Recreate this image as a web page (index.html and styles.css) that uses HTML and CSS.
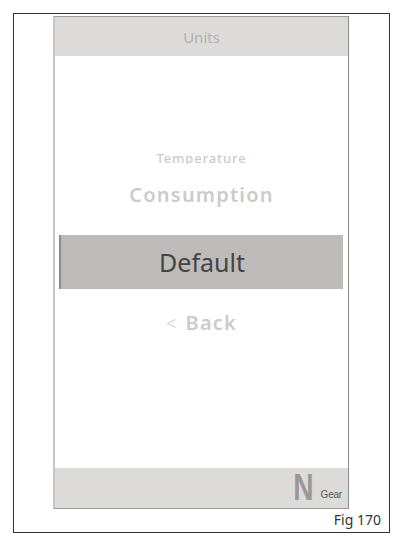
FILE: index.html
```html
<!DOCTYPE html>
<html lang="en">
<head>
    <meta charset="UTF-8">
    <meta name="viewport" content="width=device-width, initial-scale=1.0">
    <title>Units</title>
    <link rel="stylesheet" href="styles.css">
</head>
<body>

    <div class="frame">
        <!-- Dashboard screen -->
        <div class="screen">
            <div class="screen-header">Units</div>

            <div class="menu">
                <div class="item-clip">
                    <span class="item item-small">Temperature</span>
                </div>
                <div class="item">Consumption</div>
                <div class="item item-selected">Default</div>
                <div class="item"><span class="chevron">&lt;</span>Back</div>
            </div>

            <div class="screen-footer">
                <span class="gear-value">N</span>
                <span class="gear-label">Gear</span>
            </div>
        </div>

        <div class="caption">Fig 170</div>
    </div>

</body>
</html>
```

FILE: styles.css
```css
body {
    font-family: "Noto Sans", "Open Sans", sans-serif;
    margin: 0;
    background-color: #fff;
}
.frame {
    margin: 13px 0 0 13px;
    width: 336px;
    height: 516px;
    border: 1px solid #333;
    padding: 2px 0 0 39px;
    display: flex;
    flex-direction: column;
}
.screen {
    width: 293px;
    height: 491px;
    border-top: 1px solid #999;
    border-left: 2px solid #c6c6c6;
    border-right: 1px solid #8a8a8a;
    border-bottom: 1px solid #999;
    display: flex;
    flex-direction: column;
}
.screen-header {
    height: 39px;
    background-color: #dcdbd9;
    color: #b0afae;
    font-size: 15px;
    display: flex;
    align-items: center;
    justify-content: center;
}
.menu {
    flex: 1;
    display: flex;
    flex-direction: column;
    padding-top: 96px;
}
.item {
    height: 30px;
    line-height: 30px;
    text-align: center;
    font-size: 20px;
    font-weight: 600;
    letter-spacing: 1.2px;
    color: #cbcbcb;
}
.item-clip {
    height: 12px;
    overflow: hidden;
    display: flex;
    align-items: flex-end;
    justify-content: center;
    margin-bottom: 16px;
}
.item-small {
    height: 16px;
    line-height: 16px;
    font-size: 13px;
    font-weight: 500;
    letter-spacing: 0.9px;
    margin-bottom: -2px;
}
.item-selected {
    height: 54px;
    line-height: 54px;
    margin: 25px 5px 19px 4px;
    background-color: #bebab9;
    border-left: 2px solid #8e8c8b;
    font-size: 25px;
    font-weight: 400;
    letter-spacing: 0;
    color: #444;
}
.chevron {
    font-weight: 300;
    font-size: 18px;
    margin-right: 8px;
}
.screen-footer {
    height: 40px;
    background-color: #dcdbd9;
    display: flex;
    align-items: flex-end;
    justify-content: flex-end;
    padding-right: 6px;
}
.gear-value {
    display: inline-block;
    font-family: "Liberation Sans", Arial, sans-serif;
    font-weight: 700;
    font-size: 37px;
    line-height: 40px;
    color: #999896;
    transform: scaleX(0.76);
    margin-right: 4px;
}
.gear-label {
    font-family: "Liberation Sans", Arial, sans-serif;
    font-size: 10px;
    letter-spacing: -0.2px;
    line-height: 16px;
    color: #555;
    margin-bottom: 5px;
}
.caption {
    align-self: flex-end;
    margin-right: 8px;
    font-size: 14px;
    color: #333;
    line-height: 22px;
}
```
